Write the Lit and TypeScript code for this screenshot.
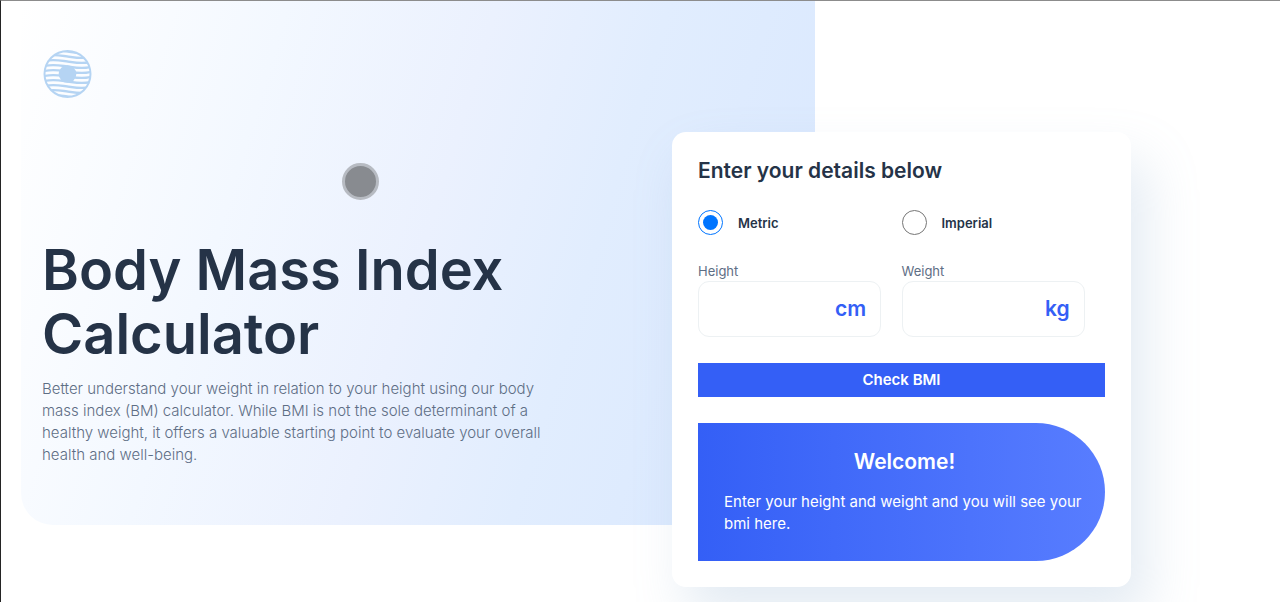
import { LitElement, html, svg, css } from "lit";
import { customElement, state } from "lit/decorators.js";

type Units = "metric" | "imperial";

@customElement("bmi-logo")
class BmiLogo extends LitElement {
  static styles = css`
    :host { display: block; width: 49px; height: 49px; }
    svg { display: block; width: 100%; height: 100%; }
  `;
  render() {
    const rows = [4, 9, 14, 19, 24, 29, 34, 39, 44];
    return html`<svg viewBox="0 0 49 49" aria-hidden="true">
      <clipPath id="disc"><circle cx="24.5" cy="24" r="22" /></clipPath>
      <circle cx="24.5" cy="24" r="24" fill="#b5d4f3" />
      <g fill="none" stroke="#fcfdff" stroke-width="2.7" clip-path="url(#disc)">
        ${rows.map((y) => svg`<path d="M0 ${y}C9 ${y - 3} 17 ${y - 1} 24.500 ${y}S40 ${y + 3} 49 ${y}" />`)}
      </g>
      <circle cx="24.5" cy="24" r="8.8" fill="#b5d4f3" />
    </svg>`;
  }
}

@customElement("bmi-form")
class BmiForm extends LitElement {
  @state() units: Units = "metric";
  @state() result = "";

  static styles = css`
    :host {
      display: block;
      box-sizing: border-box;
      padding: 26px;
      border-radius: 14px;
      background: #fff;
      box-shadow: 15px 29px 51px rgba(143, 174, 207, 0.25);
      color: #253347;
    }
    h2, p { margin: 0; }
    .form { display: flex; flex-direction: column; gap: 26px; }
    .title { font-size: 21px; line-height: 26px; font-weight: 600; }
    .pair { display: grid; grid-template-columns: repeat(2, minmax(0, 1fr)); }
    .choice {
      display: flex;
      align-items: center;
      gap: 15px;
      font-size: 13px;
      line-height: 20px;
      font-weight: 600;
    }
    .radio {
      appearance: none;
      display: grid;
      place-items: center;
      box-sizing: border-box;
      width: 25px;
      height: 25px;
      margin: 0;
      border: 1px solid #767676;
      border-radius: 50%;
    }
    .radio:checked { border-color: #0075ff; }
    .radio:checked::before {
      content: "";
      width: 15px;
      height: 15px;
      border-radius: 50%;
      background: #0075ff;
    }
    .label {
      display: block;
      font-size: 13px;
      line-height: 20px;
      color: #5e6e85;
    }
    .field {
      display: flex;
      align-items: center;
      box-sizing: border-box;
      width: 90%;
      height: 56px;
      padding: 0 14px;
      border: 1px solid #edf1f3;
      border-radius: 11px;
    }
    .value {
      flex: 1;
      width: 0;
      min-width: 0;
      padding: 0;
      border: 0;
      outline: 0;
      background: none;
      font: 600 21px/26px Inter, sans-serif;
      color: #253347;
    }
    .unit { font-size: 21px; line-height: 26px; font-weight: 600; color: #345ff6; }
    .submit {
      height: 34px;
      padding: 0;
      border: 0;
      background: #345ff6;
      color: #fff;
      font: 600 15px/22px Inter, sans-serif;
    }
    .result {
      display: flex;
      flex-direction: column;
      gap: 16px;
      padding: 26px 20px 26px 26px;
      border-radius: 0 999px 999px 0;
      background: linear-gradient(90deg, #345ff6, #587dff);
      color: #fff;
    }
    .welcome { font-size: 21px; line-height: 26px; font-weight: 600; text-align: center; }
    .note { font-size: 15px; line-height: 22px; }
  `;

  private check(e: Event) {
    e.preventDefault();
    const data = new FormData(e.target as HTMLFormElement);
    const h = Number(data.get("height"));
    const w = Number(data.get("weight"));
    if (!h || !w) return;
    const bmi = this.units === "metric" ? w / (h / 100) ** 2 : (703 * w) / h ** 2;
    this.result = bmi.toFixed(1);
  }

  private choice(units: Units, text: string) {
    return html`<label class="choice">
      <input class="radio" type="radio" name="units" .checked=${this.units === units}
        @change=${() => (this.units = units)} />${text}
    </label>`;
  }

  private field(name: string, text: string, unit: string) {
    return html`<div>
      <label class="label" for=${name}>${text}</label>
      <div class="field">
        <input class="value" id=${name} name=${name} type="text" inputmode="decimal" />
        <span class="unit">${unit}</span>
      </div>
    </div>`;
  }

  render() {
    const metric = this.units === "metric";
    return html`<form class="form" @submit=${this.check}>
      <h2 class="title">Enter your details below</h2>
      <div class="pair">
        ${this.choice("metric", "Metric")}
        ${this.choice("imperial", "Imperial")}
      </div>
      <div class="pair">
        ${this.field("height", "Height", metric ? "cm" : "in")}
        ${this.field("weight", "Weight", metric ? "kg" : "lb")}
      </div>
      <button class="submit">Check BMI</button>
      <div class="result">
        <h2 class="welcome">${this.result || "Welcome!"}</h2>
        <p class="note">Enter your height and weight and you will see your bmi here.</p>
      </div>
    </form>`;
  }
}

@customElement("app-root")
class AppRoot extends LitElement {
  static styles = css`
    :host {
      display: block;
      box-sizing: border-box;
      height: 100vh;
      overflow: hidden;
      border-top: 1px solid #8c8c8c;
      border-left: 1px solid #242424;
      padding-left: 20px;
      background: #fff;
      font-family: Inter, sans-serif;
      color: #253347;
    }
    h1, p { margin: 0; }
    .page {
      display: grid;
      grid-template-columns: 651fr 143fr 316fr 149fr;
      align-items: start;
    }
    .hero {
      grid-area: 1 / 1 / 2 / 3;
      padding: 49px 21px 59px;
      border-radius: 0 0 0 32px;
      background: linear-gradient(107deg, #fff 0%, #f3f8ff 28%, #ebf1fe 50%, #e1edfe 68%, #d8e7fe 100%);
    }
    .logo { margin-left: 1px; }
    .heading {
      margin-top: 139px;
      max-width: 500px;
      font-size: 56px;
      line-height: 64px;
      font-weight: 600;
    }
    .intro {
      margin-top: 12px;
      max-width: 504px;
      font-size: 15px;
      line-height: 22px;
      font-weight: 300;
      color: #5e6e85;
    }
    .form { grid-area: 1 / 2 / 2 / 4; margin-top: 131px; }
    .pointer {
      position: absolute;
      left: 342px;
      top: 163px;
      box-sizing: border-box;
      width: 37px;
      height: 37px;
      border: 3px solid #b7bbc2;
      border-radius: 50%;
      background: #888b90;
      pointer-events: none;
    }
  `;
  render() {
    return html`<main class="page">
        <section class="hero">
          <bmi-logo class="logo"></bmi-logo>
          <h1 class="heading">Body Mass Index Calculator</h1>
          <p class="intro">
            Better understand your weight in relation to your height using our body mass index
            (BM) calculator. While BMI is not the sole determinant of a healthy weight, it offers
            a valuable starting point to evaluate your overall health and well-being.
          </p>
        </section>
        <bmi-form class="form"></bmi-form>
      </main>
      <div class="pointer"></div>`;
  }
}
